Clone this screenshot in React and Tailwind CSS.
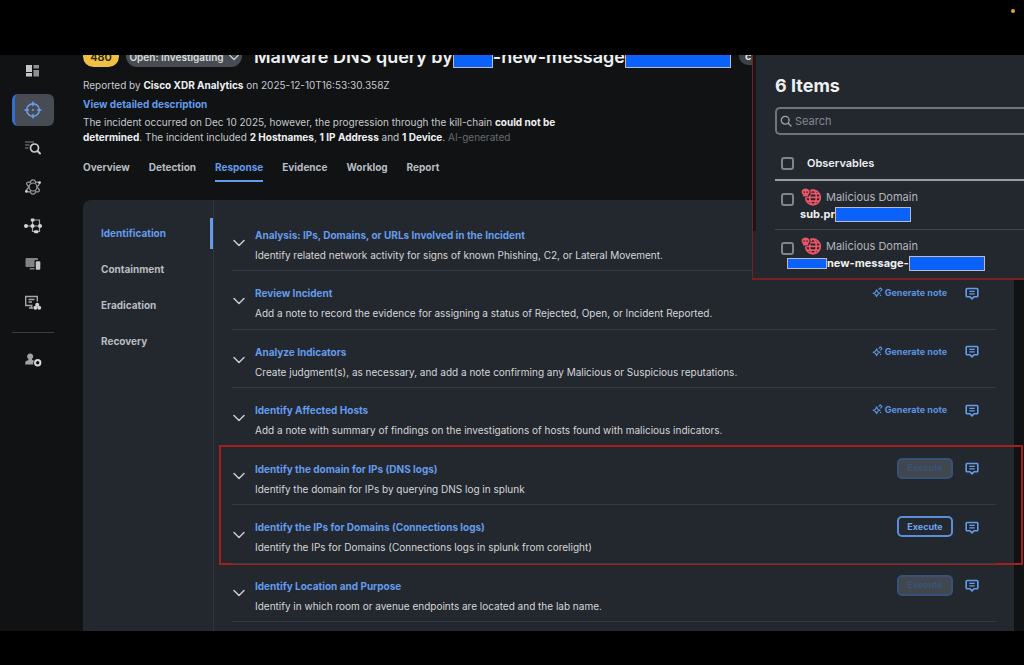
import React from "react";

const tasks = [
  { title: "Analysis: IPs, Domains, or URLs Involved in the Incident", text: "Identify related network activity for signs of known Phishing, C2, or Lateral Movement.", action: "none" },
  { title: "Review Incident", text: "Add a note to record the evidence for assigning a status of Rejected, Open, or Incident Reported.", action: "note" },
  { title: "Analyze Indicators", text: "Create judgment(s), as necessary, and add a note confirming any Malicious or Suspicious reputations.", action: "note" },
  { title: "Identify Affected Hosts", text: "Add a note with summary of findings on the investigations of hosts found with malicious indicators.", action: "note" },
  { title: "Identify the domain for IPs (DNS logs)", text: "Identify the domain for IPs by querying DNS log in splunk", action: "disabled", marked: true },
  { title: "Identify the IPs for Domains (Connections logs)", text: "Identify the IPs for Domains (Connections logs in splunk from corelight)", action: "execute" },
  { title: "Identify Location and Purpose", text: "Identify in which room or avenue endpoints are located and the lab name.", action: "disabled" },
];

function Chevron({ className }) {
  return (
    <svg viewBox="0 0 12 8" className={className} fill="none" stroke="currentColor" strokeWidth="1.5" strokeLinecap="round" strokeLinejoin="round" aria-hidden="true">
      <path d="M1 1.5 6 6.5 11 1.5" />
    </svg>
  );
}

function SparkIcon() {
  return (
    <svg viewBox="0 0 12 12" className="size-[11px]" fill="none" stroke="currentColor" strokeWidth="1.3" strokeLinejoin="round" aria-hidden="true">
      <path d="M5 3Q5.600 6.200 8.800 6.800 5.600 7.400 5 10.600 4.400 7.400 1.200 6.800 4.400 6.200 5 3Z" />
      <path d="M7.200 2.800 9 1 10.900 2.900 9.100 4.700" />
      <circle cx="9.300" cy="9.300" r=".8" fill="currentColor" stroke="none" />
    </svg>
  );
}

function NoteIcon() {
  return (
    <svg viewBox="0 0 14 14" className="h-[14px] w-[14px]" fill="none" stroke="currentColor" aria-hidden="true">
      <path strokeWidth="1.6" strokeLinejoin="round" d="M2 2.500h10q.8 0 .8.8v6.600q0 .8-.8.8H9L7 12.900 5 10.700H2q-.8 0-.8-.8V3.300q0-.8.8-.8Z" />
      <path strokeWidth="1.300" d="M4.300 5.400h5.400M4.300 7.800h5.400" />
    </svg>
  );
}

function MaliciousIcon() {
  return (
    <svg viewBox="0 0 20 18" className="h-[18px] w-5 shrink-0" aria-hidden="true">
      <g fill="none" stroke="#ec5566" strokeWidth="1.700">
        <circle cx="12" cy="9.400" r="7.300" />
        <ellipse cx="12" cy="9.400" rx="3.300" ry="7.300" />
        <path d="M4.700 9.400h14.600M5.800 5.600h12.200M5.800 13.200h12.200" />
      </g>
      <circle cx="4.700" cy="4.600" r="4.900" fill="#23272e" />
      <path fill="#ec5566" d="M4.600.6c2.300 0 4 1.500 4 3.500 0 1.200-.6 2-1.400 2.600v1.700H2V6.700C1.200 6.100.6 5.300.6 4.100.6 2.100 2.300.6 4.600.6Z" />
      <path fill="#23272e" d="M2.400 3.600h1.500v1.200H2.400ZM5.300 3.600h1.500v1.200H5.300Z" />
    </svg>
  );
}

const railItems = [
  {
    label: "Dashboard",
    icon: (
      <>
        <path fill="#c3c5c8" d="M2 3h6v7H2zM2 11h6v3.500H2z" />
        <path fill="#8b8e93" d="M9.500 3H15v3.500H9.500zM9.500 8H15v6.500H9.500z" />
      </>
    ),
  },
  {
    label: "Incidents",
    active: true,
    icon: (
      <g fill="none" stroke="#6ea3ee" strokeWidth="1.400" strokeLinecap="round">
        <circle cx="9" cy="9" r="6.300" />
        <path d="M9 1v3.500M9 13.500V17M1 9h3.500M13.500 9H17" />
        <circle cx="9" cy="9" r="1" fill="#6ea3ee" stroke="none" />
      </g>
    ),
  },
  {
    label: "Investigate",
    icon: (
      <g fill="none">
        <path stroke="#85888d" strokeWidth="1.200" d="M1 3h9M1 6h4.500M1 9h3.500" />
        <circle cx="10.500" cy="9" r="4" stroke="#c9cbce" strokeWidth="1.700" />
        <path stroke="#c9cbce" strokeWidth="2" strokeLinecap="round" d="m13.500 12 2.500 2.500" />
      </g>
    ),
  },
  {
    label: "Intelligence",
    icon: (
      <>
        <g fill="none" stroke="#989ba0" strokeWidth="1.200">
          <circle cx="9" cy="9" r="4" />
          <path d="M6.500 5.200a2.600 2.600 0 1 1 5 0M6.500 12.800a2.600 2.600 0 1 0 5 0" />
          <path d="M6.500 4.200Q2.500 3.600 2.600 5.600 2.800 7 5 9 2.800 11 2.600 12.400 2.500 14.400 6.500 13.800M11.500 4.200q4-.6 3.900 1.400Q15.200 7 13 9q2.200 2 2.400 3.400.1 2-3.900 1.400" />
        </g>
        <g fill="#d0d2d4">
          <circle cx="15.600" cy="4.600" r="1.400" />
          <circle cx="2.400" cy="13.400" r="1.400" />
        </g>
      </>
    ),
  },
  {
    label: "Automate",
    icon: (
      <>
        <path fill="none" stroke="#a3a6aa" strokeWidth="1.200" d="M2 9h14M8.500 3v6M9 3h6.500v6M8.500 9v5.500h3M15.500 9v5.500h-3" />
        <g fill="#d4d6d8">
          <circle cx="2" cy="9" r="2" />
          <circle cx="8.500" cy="9" r="2.100" />
          <circle cx="16" cy="9" r="2" />
          <rect x="6.800" y="1.500" width="3.600" height="3" rx="1" />
          <rect x="10" y="13.300" width="4.400" height="3" rx="1" />
        </g>
      </>
    ),
  },
  {
    label: "Assets",
    icon: (
      <>
        <path fill="#808388" d="M2.500 3h10.500q1 0 1 1v1h-2.500q-1 0-1 1v6H2.500q-1 0-1-1V4q0-1 1-1ZM6 13h4.500v1.500H5.500Z" />
        <rect x="11.800" y="6.200" width="4.500" height="8.500" rx="1" fill="#c3c5c8" />
      </>
    ),
  },
  {
    label: "Client Management",
    icon: (
      <>
        <path fill="none" stroke="#a3a6aa" strokeWidth="1.400" d="M8.500 11.500H1.700V2.500h11.600v5M4.500 5.500h6M4.500 8h3.500M5 14h4" />
        <path fill="none" stroke="#a3a6aa" strokeWidth="1.400" d="M7.500 11.500V14" />
        <g fill="#d0d2d4">
          <circle cx="13.200" cy="10.800" r="2" />
          <circle cx="11.400" cy="13.800" r="2" />
          <circle cx="15.200" cy="13.800" r="2" />
        </g>
      </>
    ),
  },
];

function RailIcon({ children }) {
  return (
    <svg viewBox="0 0 18 18" className="size-[18px]" aria-hidden="true">
      {children}
    </svg>
  );
}

function Rail() {
  return (
    <nav aria-label="Main" className="flex w-[65px] shrink-0 flex-col items-center">
      <div className="flex h-[264px] flex-col justify-between">
        {railItems.map((item) => (
          <button
            key={item.label}
            type="button"
            aria-label={item.label}
            className={
              item.active
                ? "flex h-8 w-[42px] items-center justify-center rounded-md border-l-[3px] border-[#2f6fd0] bg-[#474b54] pr-[3px]"
                : "flex h-8 w-[42px] items-center justify-center"
            }
          >
            <RailIcon>{item.icon}</RailIcon>
          </button>
        ))}
      </div>
      <hr className="mt-[13px] w-[42px] border-[#3b3e43]" />
      <button type="button" aria-label="Administration" className="mt-[11px] flex h-8 w-[42px] items-center justify-center">
        <RailIcon>
          <path fill="#a0a3a8" d="M6.200 2.500a3 3 0 0 1 1.700 5.500q0 1 1.200 1.300.8.200.8.700-.9 1.200-.7 3.500H1.200V12q0-2.300 3.200-2.800V8a3 3 0 0 1 1.800-5.500Z" />
          <circle cx="13.700" cy="11.700" r="2.700" fill="none" stroke="#d4d6d8" strokeWidth="2" />
        </RailIcon>
      </button>
    </nav>
  );
}

function Action({ kind }) {
  if (kind === "note") {
    return (
      <button type="button" className="flex items-center gap-[2px] pr-[6px] text-[9px] font-bold text-[#5d93e0]">
        <SparkIcon />
        Generate note
      </button>
    );
  }
  if (kind === "execute") {
    return (
      <button type="button" className="h-[21px] w-14 rounded-[5px] border-2 border-[#5c8fdb] text-[9px] font-bold text-[#6ea3ee]">
        Execute
      </button>
    );
  }
  return (
    <button type="button" disabled className="h-[21px] w-14 rounded-[5px] border-2 border-[#37517a] bg-[#42464d] text-[9px] font-bold text-[#3a537c]">
      Execute
    </button>
  );
}

function Task({ task }) {
  return (
    <li className="relative flex border-b border-[#363b42]">
      <button type="button" aria-label={"Expand " + task.title} className="flex w-[23px] shrink-0 items-center pt-[2px] text-[#c9cbce]">
        <Chevron className="ml-px h-2 w-3" />
      </button>
      <div className="min-w-0 flex-1 pt-[14px]">
        <h3 className="text-[10px] leading-4 font-bold text-[#649ceb]">{task.title}</h3>
        <p className="mt-1 text-[10px] leading-4 text-[#d5d7d9]">{task.text}</p>
      </div>
      {task.action !== "none" && (
        <div className="mt-[11px] flex h-[21px] shrink-0 items-center gap-3 pr-[17px]">
          <Action kind={task.action} />
          <button type="button" aria-label="Add note" className="text-[#649ceb]">
            <NoteIcon />
          </button>
        </div>
      )}
      {task.marked && <div className="pointer-events-none absolute -top-[2px] -right-[27px] -left-[13px] h-[120px] border-2 border-[#a81e1e]" />}
    </li>
  );
}

function Observable({ name, children }) {
  return (
    <li className="flex h-[49px] items-start gap-[7px] border-b border-[#43474e] pl-[6px]">
      <input type="checkbox" aria-label={name} className="mt-3 size-[13px] shrink-0 appearance-none rounded-[3px] border-2 border-[#80848a]" />
      <div className="pt-[7px]">
        <div className="flex items-center gap-[5px] text-[11px] leading-[18px] text-[#b3b6ba]">
          <MaliciousIcon />
          Malicious Domain
        </div>
        {children}
      </div>
    </li>
  );
}

function ItemsPanel() {
  return (
    <aside className="absolute top-0 right-0 flex h-[225px] w-[272px] border-b-2 border-l border-[#7a1f22] bg-[#23272e]">
      <div className="h-[176px] w-[3px] shrink-0 bg-[#15171a]" />
      <div className="min-w-0 flex-1 overflow-hidden pl-[19px]">
        <h2 className="mt-[18px] text-lg leading-[26px] font-bold text-[#eef0f2]">6 Items</h2>
        <label className="mt-2 flex h-7 items-center gap-[3px] rounded-l-[5px] border-2 border-r-0 border-[#70747b] pl-[3px]">
          <svg viewBox="0 0 12 12" className="size-3 shrink-0" fill="none" stroke="#a3a6ab" strokeWidth="1.300" strokeLinecap="round" aria-hidden="true">
            <circle cx="5.200" cy="5.200" r="3.900" />
            <path d="m8.200 8.200 2.800 2.800" />
          </svg>
          <input type="search" aria-label="Search" placeholder="Search" className="min-w-0 flex-1 bg-transparent text-[11px] outline-none placeholder:text-[#858990]" />
        </label>
        <label className="flex h-[46px] items-center gap-[13px] border-b-2 border-[#9b9ea3] pt-[13px] pl-[6px] text-[11px] font-semibold text-[#eef0f2]">
          <input type="checkbox" className="size-[13px] shrink-0 appearance-none rounded-[3px] border-2 border-[#80848a]" />
          Observables
        </label>
        <ul>
          <Observable name="Select first domain">
            <div className="-ml-[1px] flex items-center text-[11px] leading-4 font-bold text-[#eef0f2]">
              sub.pr
              <span className="h-[15px] w-[76px] border border-[#b9bcc2] bg-[#0a62fb]" />
            </div>
          </Observable>
          <Observable name="Select second domain">
            <div className="-ml-[14px] flex items-center text-[11px] leading-4 font-bold text-[#eef0f2]">
              <span className="h-[11px] w-10 border border-[#b9bcc2] bg-[#0a62fb]" />
              new-message-
              <span className="h-[15px] w-[76px] border border-[#b9bcc2] bg-[#0a62fb]" />
            </div>
          </Observable>
        </ul>
      </div>
    </aside>
  );
}

const tabs = ["Overview", "Detection", "Response", "Evidence", "Worklog", "Report"];
const phases = ["Identification", "Containment", "Eradication", "Recovery"];

export default function App() {
  return (
    <div className="flex h-screen flex-col bg-black font-['Inter',sans-serif]">
      <div className="flex h-[55px] shrink-0 items-start justify-end pt-[9px] pr-[9px]">
        <span className="size-1 rounded-full bg-[#e9a23b]" />
      </div>

      <div className="relative flex min-h-0 flex-1 overflow-hidden bg-[#101214]">
        <Rail />
        <main className="flex min-w-0 flex-1 flex-col pr-[10px] pl-[18px]">
          <header>
            <div className="-mt-[11px] flex h-6 items-center whitespace-nowrap">
              <span className="flex h-[21px] w-9 items-center justify-center rounded-full bg-[#efc042] pt-[2px] text-[11px] font-semibold text-[#2c2613]">480</span>
              <button type="button" className="ml-[7px] flex h-[22px] w-[116px] items-center justify-center gap-[5px] rounded-full bg-[#474b52] pt-[2px] text-[10px] font-semibold text-[#d9dbdd]">
                Open: Investigating
                <Chevron className="h-[7px] w-[10px]" />
              </button>
              <h1 className="ml-3 flex items-center pt-[2px] text-lg leading-[22px] font-semibold text-[#eef0f2]">
                Malware DNS query by
                <span className="h-[22px] w-10 border border-[#b9bcc2] bg-[#0a62fb]" />
                -new-message
                <span className="h-[22px] w-[106px] border border-[#b9bcc2] bg-[#0a62fb]" />
              </h1>
              <span className="ml-2 flex h-[18px] w-16 items-center rounded-full bg-[#3f4247] pl-[6px] text-[11px] font-semibold text-[#eef0f2]">c</span>
            </div>
            <p className="mt-[9px] text-[10px] leading-4 text-[#c6c9cc]">
              Reported by <b className="font-bold text-[#eef0f2]">Cisco XDR Analytics</b> on 2025-12-10T16:53:30.358Z
            </p>
            <a href="#description" className="mt-[3px] block w-fit text-[10px] leading-4 font-bold text-[#649ceb]">
              View detailed description
            </a>
            <p className="mt-[3px] max-w-[510px] text-[10px] leading-[15px] text-[#c6c9cc]">
              The incident occurred on Dec 10 2025, however, the progression through the kill-chain{" "}
              <b className="font-bold text-[#eef0f2]">could not be determined</b>. The incident included{" "}
              <b className="font-bold text-[#eef0f2]">2 Hostnames</b>, <b className="font-bold text-[#eef0f2]">1 IP Address</b> and{" "}
              <b className="font-bold text-[#eef0f2]">1 Device</b>. <span className="text-[#666c72]">AI-generated</span>
            </p>
            <nav aria-label="Incident" className="mt-3 flex gap-[19px]">
              {tabs.map((tab) => (
                <a
                  key={tab}
                  href={"#" + tab.toLowerCase()}
                  className={
                    tab === "Response"
                      ? "h-[25px] border-b-2 border-[#649ceb] pt-[2px] text-[10px] leading-4 font-bold text-[#649ceb]"
                      : "h-[25px] pt-[2px] text-[10px] leading-4 font-bold text-[#b9bcc0]"
                  }
                >
                  {tab}
                </a>
              ))}
            </nav>
          </header>

          <section className="mt-[18px] flex min-h-0 flex-1 rounded-tl-lg bg-[#23272e]">
            <nav aria-label="Response phase" className="flex w-[131px] shrink-0 flex-col gap-[5px] border-r border-[#30353c] pt-[18px] pl-[18px]">
              {phases.map((phase, i) => (
                <a
                  key={phase}
                  href={"#" + phase.toLowerCase()}
                  className={
                    i === 0
                      ? "flex h-[31px] items-center border-r-[3px] border-[#649ceb] text-[10px] font-bold text-[#649ceb]"
                      : "flex h-[31px] items-center text-[10px] font-bold text-[#b9bcc0]"
                  }
                >
                  {phase}
                </a>
              ))}
            </nav>
            <ul className="grid flex-1 auto-rows-fr pt-[13px] pr-[18px] pb-[9px] pl-[18px]">
              {tasks.map((task) => (
                <Task key={task.title} task={task} />
              ))}
            </ul>
          </section>
        </main>
        <ItemsPanel />
      </div>

      <div className="h-[34px] shrink-0" />
    </div>
  );
}
